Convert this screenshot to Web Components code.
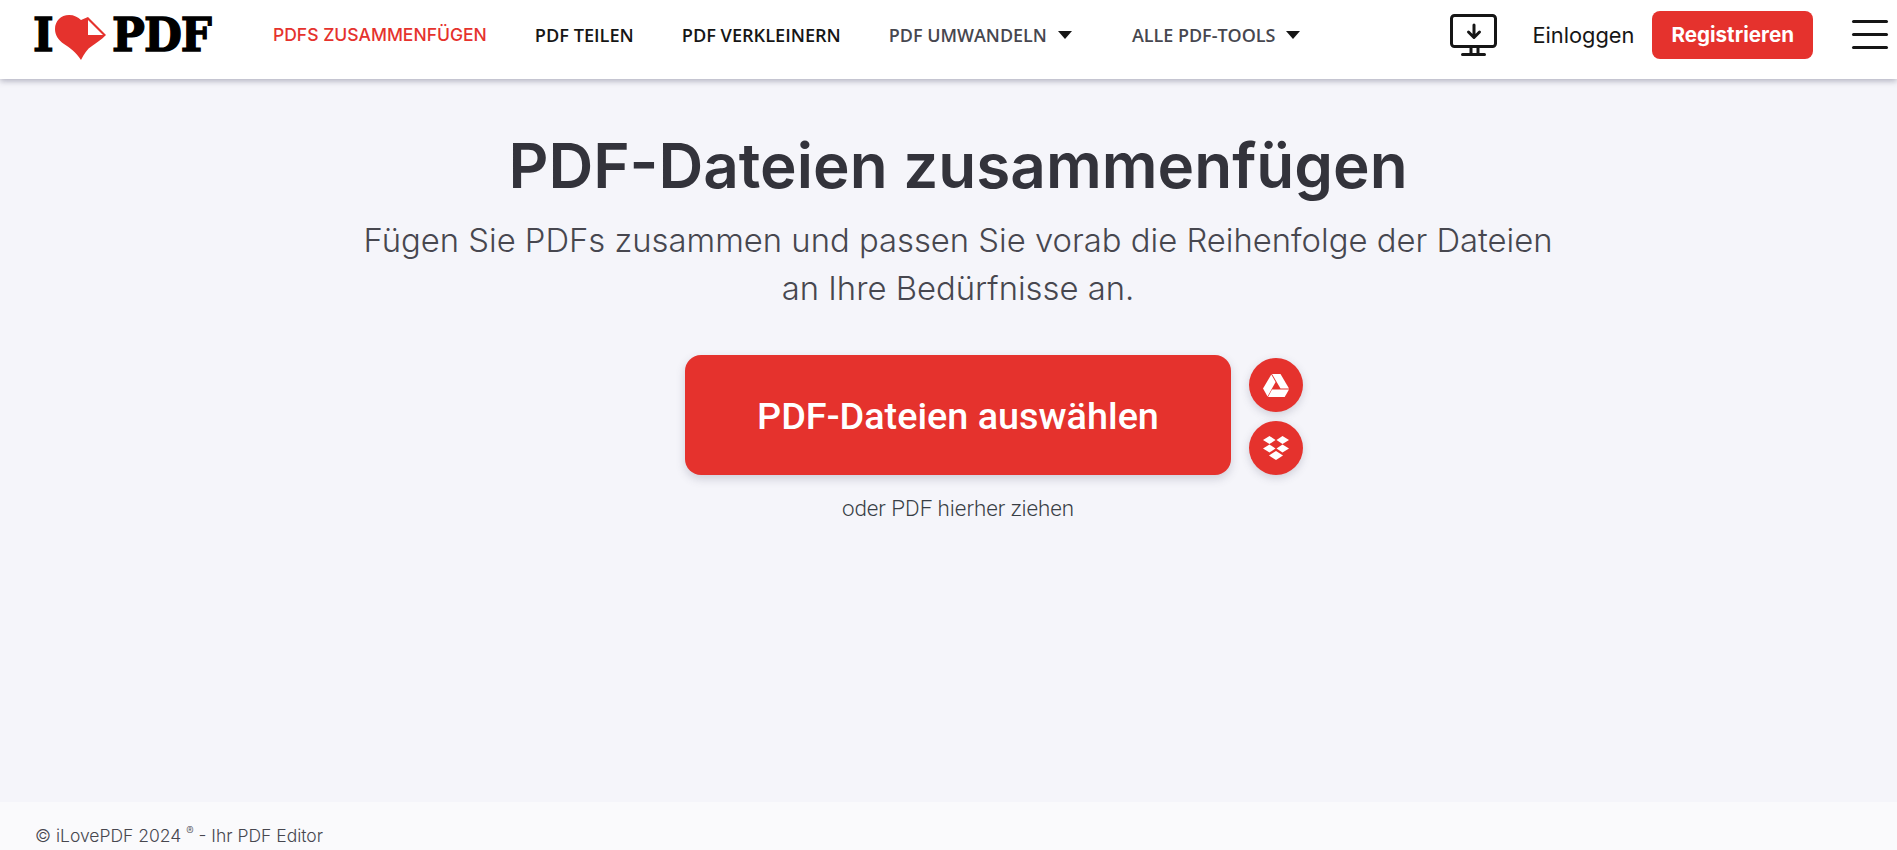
<!DOCTYPE html>
<html lang="de"><head><meta charset="utf-8"><title>PDF-Dateien zusammenfügen</title>
<style>
html,body{margin:0;height:850px;overflow:hidden;background:#f5f5fa;font-family:Inter,"Liberation Sans",sans-serif}
body{display:flex;flex-direction:column}
</style></head><body>
<site-header>
  <nav-link active>PDFS ZUSAMMENFÜGEN</nav-link>
  <nav-link>PDF TEILEN</nav-link>
  <nav-link>PDF VERKLEINERN</nav-link>
  <nav-link menu>PDF UMWANDELN</nav-link>
  <nav-link menu>ALLE PDF-TOOLS</nav-link>
</site-header>
<hero-section></hero-section>
<site-footer>© iLovePDF 2024 <sup>®</sup> - Ihr PDF Editor</site-footer>
<script>
function el(name,html){customElements.define(name,class extends HTMLElement{constructor(){super();this.attachShadow({mode:'open'}).innerHTML=html}})}
el('brand-logo',`<style>
:host{display:flex;align-items:center;width:181px;height:46px;color:#000;font:900 46px/46px "DejaVu Serif",serif;-webkit-text-stroke:1.4px #000}
span{display:block;transform-origin:left center}
.i{width:24px;transform:scaleX(.96)}
.p{transform:scaleX(.95);letter-spacing:-1px;white-space:nowrap}
svg{display:block;flex:none;margin:0 5px 0 0;-webkit-text-stroke:0;position:relative;top:3px}
</style><span class="i">I</span><svg width="52" height="46" viewBox="0 0 52 46"><path fill="#e5322d" d="M26 45C21 37 15 33 9 29 3 25 0 20 0 14 0 6 6 0 14 0 19 0 23 2 26 5L33 2 51 20C46 25 41 28 37 31 32 34 29 39 26 45Z"/><path fill="#fff" d="M33 5V20H48Z"/></svg><span class="p">PDF</span>`);
el('nav-link',`<style>
:host{display:flex;align-items:center;gap:11px;font:550 18.15px/20px "Open Sans",sans-serif;color:#161616;white-space:nowrap}
:host([active]){color:#e5322d;font:500 17.5px/20px Inter,sans-serif}
:host([menu]){color:#47474f;font-size:17.95px}
:host([menu]) svg{display:block}
svg{display:none}
</style><slot></slot><svg width="14" height="8" viewBox="0 0 14 8"><path fill="#161616" d="M0 0H14L7 8Z"/></svg>`);
el('site-header',`<style>
:host{display:flex;align-items:center;flex:none;height:79px;background:#fff;box-shadow:0 2px 6px rgba(72,72,100,.4);position:relative;z-index:1;box-sizing:border-box;padding:0 9px 10px 33px}
nav{display:flex;align-items:center;margin-left:59px;gap:48px}
::slotted(nav-link:last-child){margin-left:12px}
.right{display:flex;align-items:center;margin-left:auto}
.login{font:400 21.8px/24px Inter,sans-serif;color:#161616;margin:0 18px 0 34px}
.reg{font:700 20.6px/48px Inter,sans-serif;color:#fff;background:#e5322d;border-radius:8px;padding:0 19px;height:48px;margin-right:39px}
.burger{display:flex;flex-direction:column;gap:10px;width:36px}
.burger i{display:block;height:3px;background:#161616;border-radius:2px}
svg{display:block}
</style><brand-logo></brand-logo><nav><slot></slot></nav>
<div class="right"><svg width="48" height="42" viewBox="0 0 48 42" fill="none" stroke="#161616" stroke-width="3" stroke-linecap="round" stroke-linejoin="round"><rect x="1.5" y="1.5" width="44" height="31" rx="3"/><path d="M24 11V23M18.5 18 24 23.5 29.5 18"/><path d="M21 33V40M28 33V40M12.5 40.5H34.5"/></svg>
<span class="login">Einloggen</span><span class="reg">Registrieren</span><div class="burger"><i></i><i></i><i></i></div></div>`);
el('cloud-button',`<style>
:host{display:flex;align-items:center;justify-content:center;width:54px;height:54px;border-radius:50%;background:#e5322d;box-shadow:0 3px 8px rgba(72,72,100,.22)}
svg{display:block}
</style><slot></slot>`);
el('upload-area',`<style>
:host{display:grid;grid-template-columns:1fr 546px 1fr;column-gap:18px;align-self:stretch}
.btn{grid-column:2;height:120px;box-sizing:border-box;padding-top:1px;display:flex;align-items:center;justify-content:center;background:#e5322d;border-radius:16px;color:#fff;font:500 37.8px/44px Roboto,sans-serif;box-shadow:0 4px 10px rgba(72,72,100,.22)}
.cloud{grid-column:3;display:flex;flex-direction:column;gap:9px;align-items:flex-start;padding-top:3px}
.hint{grid-column:2;text-align:center;margin-top:20px;font:300 22.3px/26px Roboto,sans-serif;color:#383e45}
</style><div class="btn">PDF-Dateien auswählen</div>
<div class="cloud"><cloud-button><svg width="26" height="23" viewBox="0 0 26 23" fill="#fff"><path d="M9 0H17.5L26 14.5H17.5Z"/><path d="M8.3 .5 12.6 8 4.5 22.5 0 14.5Z"/><path d="M9 15.5H26L21.7 23H5Z"/></svg></cloud-button>
<cloud-button><svg width="26" height="24" viewBox="0 0 26 24" fill="#fff"><path d="M6.5 0 12.5 4 6.5 8 0 4Z"/><path d="M19.5 0 26 4 19.5 8 13.5 4Z"/><path d="M6.5 8.5 12.5 12.5 6.5 16.5 0 12.5Z"/><path d="M19.5 8.5 26 12.5 19.5 16.5 13.5 12.5Z"/><path d="M13 15 20 19.5 13 24 6 19.5Z"/></svg></cloud-button></div>
<div class="hint">oder PDF hierher ziehen</div>`);
el('hero-section',`<style>
:host{display:flex;flex-direction:column;align-items:center;flex:1;box-sizing:border-box;padding:49px 0 0 19px}
h1{margin:0;font:600 62px/76px Inter,sans-serif;color:#33333b}
p{margin:12px 0 43px;width:1240px;text-align:center;font:300 32.8px/48px Inter,sans-serif;color:#47474f}
</style><h1>PDF-Dateien zusammenfügen</h1><p>Fügen Sie PDFs zusammen und passen Sie vorab die Reihenfolge der Dateien<br>an Ihre Bedürfnisse an.</p><upload-area></upload-area>`);
el('site-footer',`<style>
:host{display:block;flex:none;height:48px;box-sizing:border-box;padding:23px 0 0 35px;background:#fafafc;font:300 17.5px/22px Inter,sans-serif;color:#47474f}
::slotted(sup){font-size:11px;line-height:0}
</style><slot></slot>`);
</script>
</body></html>
